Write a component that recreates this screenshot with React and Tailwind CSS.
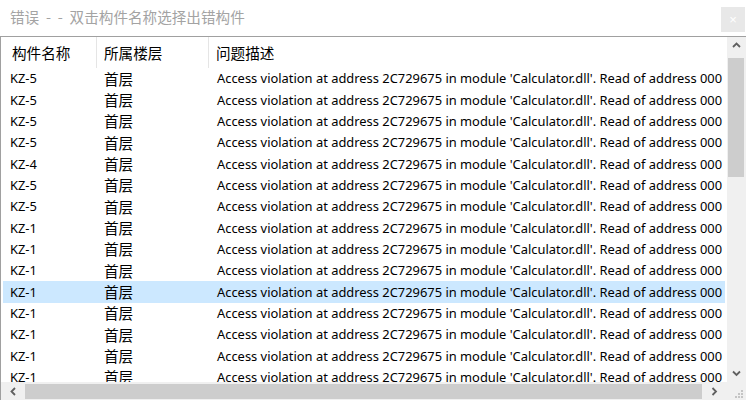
const rows = [
  'KZ-5', 'KZ-5', 'KZ-5', 'KZ-5', 'KZ-4', 'KZ-5', 'KZ-5',
  'KZ-1', 'KZ-1', 'KZ-1', 'KZ-1', 'KZ-1', 'KZ-1', 'KZ-1', 'KZ-1',
];

const MSG = "Access violation at address 2C729675 in module 'Calculator.dll'. Read of address 000";

const Chevron = ({ dir }) => {
  const pts = {
    up: '1,6 4.5,2.5 8,6',
    down: '1,2.5 4.5,6 8,2.5',
    left: '6,1 2.5,4.5 6,8',
    right: '2.5,1 6,4.5 2.5,8',
  }[dir];
  return (
    <svg width="9" height="9" viewBox="0 0 9 9">
      <polyline points={pts} fill="none" stroke="#606060" strokeWidth="1.8" />
    </svg>
  );
};

const Grip = () => (
  <svg width="12" height="12" viewBox="0 0 12 12">
    {[[9, 3], [6, 6], [9, 6], [3, 9], [6, 9], [9, 9]].map(([x, y], i) => (
      <rect key={i} x={x} y={y} width="2" height="2" fill="#c4c4c4" />
    ))}
  </svg>
);

export default function App() {
  return (
    <div className="w-[746px] h-[400px] bg-white overflow-hidden flex flex-col select-none">
      {/* title bar */}
      <div className="h-[36px] flex items-start justify-between shrink-0">
        <div className="pl-[10px] pt-[6px] text-[14.6px] text-[#a3a3a3] whitespace-pre [word-spacing:3.5px] font-['Noto_Sans_CJK_SC',sans-serif]">
          错误 - - 双击构件名称选择出错构件
        </div>
        <div className="mt-[7px] mr-[1px] w-[24px] h-[25px] bg-[#e8e8e8] flex items-center justify-center text-white text-[13px] font-['Liberation_Sans',sans-serif]">
          ×
        </div>
      </div>

      {/* list box */}
      <div className="flex-1 flex flex-col border-t border-l border-[#a0a0a0] min-h-0">
        <div className="flex-1 flex min-h-0">
          <div className="flex-1 flex flex-col min-w-0 overflow-hidden">
            {/* header */}
            <div className="h-[31px] shrink-0 flex text-[14.6px] text-black font-['Noto_Sans_CJK_SC',sans-serif]">
              <div className="w-[96px] pl-[11px] border-r border-[#e5e5e5] flex items-center">构件名称</div>
              <div className="w-[112px] pl-[7px] border-r border-[#e5e5e5] flex items-center">所属楼层</div>
              <div className="flex-1 pl-[7px] flex items-center">问题描述</div>
            </div>
            {/* rows */}
            <div className="flex-1 overflow-hidden">
              {rows.map((name, i) => (
                <div
                  key={i}
                  className={`h-[21.33px] mx-[2px] flex items-center whitespace-nowrap ${i === 10 ? 'bg-[#cce8ff]' : ''}`}
                >
                  <div className="w-[93px] pl-[7px] pt-[1px] text-[12.9px] text-black font-['Noto_Sans',sans-serif]">{name}</div>
                  <div className="w-[112px] pl-[8px] text-[14.6px] text-black font-['Noto_Sans_CJK_SC',sans-serif]">首层</div>
                  <div className="pl-[9px] pt-[1px] text-[12.9px] text-black font-['Noto_Sans',sans-serif]">{MSG}</div>
                </div>
              ))}
            </div>
          </div>

          {/* vertical scrollbar */}
          <div className="w-[19px] shrink-0 bg-[#f0f0f0] flex flex-col">
            <div className="h-[17px] flex items-center justify-center"><Chevron dir="up" /></div>
            <div className="flex-1 pt-[4px] pl-[1px] pr-[2px]">
              <div className="h-[119px] bg-[#cdcdcd]" />
            </div>
            <div className="h-[17px] flex items-center justify-center"><Chevron dir="down" /></div>
          </div>
        </div>

        {/* horizontal scrollbar */}
        <div className="h-[18px] shrink-0 flex bg-[#f0f0f0]">
          <div className="flex-1 flex items-center">
            <div className="w-[24px] h-full flex items-center justify-center"><Chevron dir="left" /></div>
            <div className="w-[677px] h-[15px] bg-[#cdcdcd]" />
            <div className="w-[24px] h-full flex items-center justify-center"><Chevron dir="right" /></div>
          </div>
          <div className="w-[19px] flex items-end justify-end pr-[2px] pb-[1px]"><Grip /></div>
        </div>
      </div>
    </div>
  );
}
